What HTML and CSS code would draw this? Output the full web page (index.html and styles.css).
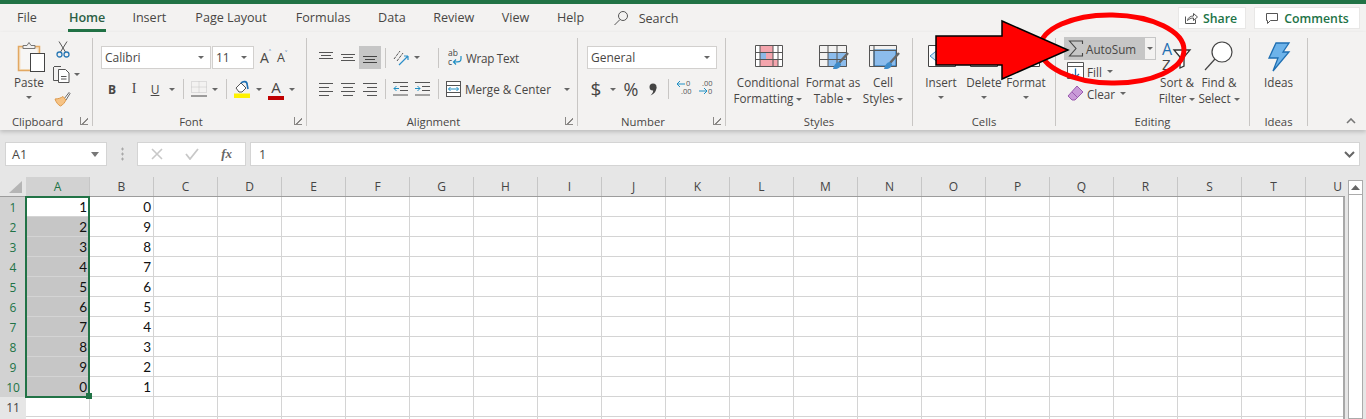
FILE: index.html
```html
<!DOCTYPE html>
<html lang="en">
<head>
<meta charset="utf-8">
<title>Excel AutoSum</title>
<link rel="stylesheet" href="styles.css">
</head>
<body>
<div class="app">
  <div class="titlebar"></div>
  <nav class="tabs">
    <span class="tab tab-file">File</span>
    <span class="tab tab-active">Home</span>
    <span class="tab tab-wide">Insert</span>
    <span class="tab tab-wide">Page Layout</span>
    <span class="tab">Formulas</span>
    <span class="tab">Data</span>
    <span class="tab">Review</span>
    <span class="tab">View</span>
    <span class="tab">Help</span>
    <span class="search">
      <svg width="16" height="16" viewBox="0 0 16 16"><circle cx="10" cy="6" r="4.5" fill="none" stroke="#555"/><path d="M7 9.500 1.500 15" stroke="#555" fill="none"/></svg>
      <span>Search</span>
    </span>
    <div class="share-area">
      <span class="pill pill-share">
        <svg width="14" height="14" viewBox="0 0 14 14"><path d="M1.500 5.500v7h10v-4M3.500 9.500c.5-3 3-4.500 6-4.500V2.500l4 3.500-4 3.500V7c-2.500 0-4.500 1-6 2.500z" fill="none" stroke="#555"/></svg>
        Share
      </span>
      <span class="pill pill-comments">
        <svg width="14" height="13" viewBox="0 0 14 13"><path d="M1.500 1.500h11v7h-7l-3 3v-3h-1z" fill="none" stroke="#555"/></svg>
        Comments
      </span>
    </div>
  </nav>

  <section class="ribbon">
    <div class="group g-clipboard">
      <div class="body clip-body">
        <div class="paste-col">
          <svg width="28" height="32" viewBox="0 0 28 32"><rect x="1.500" y="5.500" width="21" height="24" fill="#f6e3c8" stroke="#e2a862" stroke-width="1.500"/><rect x="3.500" y="8" width="17" height="20" fill="#f7f6f5"/><path d="M6 7.500V4.500h4l2-3 2 3h4v3z" fill="#f3f2f1" stroke="#777"/><rect x="13.500" y="12.500" width="14" height="18" fill="#fff" stroke="#444"/></svg>
          <span class="btn-text paste-text">Paste</span>
          <i class="caret"></i>
        </div>
        <div class="clip-small">
          <svg width="14" height="17" viewBox="0 0 14 17"><path d="M3 .500 9.500 11M11 .500 4.500 11" stroke="#555" fill="none"/><circle cx="3.500" cy="13.500" r="2.500" fill="none" stroke="#2b79b5" stroke-width="1.300"/><circle cx="10.500" cy="13.500" r="2.500" fill="none" stroke="#2b79b5" stroke-width="1.300"/></svg>
          <div class="copy-row">
            <svg width="17" height="17" viewBox="0 0 17 17"><path d="M1 .500h7M.500 1v13.500h5" fill="none" stroke="#555"/><path d="M5.500 3.500h7l3.500 3.500v9.500H5.500z" fill="#fff" stroke="#555"/><path d="M8 10.500h5.500M8 13h5.500" stroke="#555"/></svg>
            <i class="caret"></i>
          </div>
          <svg width="17" height="16" viewBox="0 0 17 16"><path d="M10 8l5-6.500 1 1L12 9z" fill="#fff" stroke="#666"/><path d="M1 8c3 0 6-1 8-2.500L12 9c-1 2-3 5-5.500 6C4 14 2 11 1 8z" fill="#f6c385" stroke="#dd9a4d"/></svg>
        </div>
      </div>
      <div class="label-row"><span class="label">Clipboard</span><i class="launcher"></i></div>
    </div>
    <i class="vsep"></i>

    <div class="group g-font">
      <div class="body tool-body">
        <div class="row1 font-row1">
          <span class="select sel-font">Calibri<i class="caret"></i></span>
          <span class="select sel-size">11<i class="caret"></i></span>
          <span class="grow-a">A<small>˄</small></span>
          <span class="shrink-a">A<small>˅</small></span>
        </div>
        <div class="row2 font-row2">
          <b class="fmt fmt-b">B</b>
          <i class="fmt fmt-i">I</i>
          <u class="fmt">U</u>
          <i class="caret"></i>
          <i class="sep"></i>
          <svg width="16" height="16" viewBox="0 0 16 16"><path d="M.500 .500h15v11H.500zM8 .500v11M.500 6h15" fill="none" stroke="#c4c4c4" stroke-dasharray="1 1"/><path d="M0 15h16" stroke="#444"/></svg>
          <i class="caret"></i>
          <i class="sep"></i>
          <svg width="17" height="18" viewBox="0 0 17 18"><path d="M2 8l5-5 5 5-4 4H5z" fill="#fff" stroke="#555"/><path d="M7 3c2-2 6-2 6 1l1 5" fill="none" stroke="#1f6fb2" stroke-width="1.600"/><rect x="0" y="13.500" width="16" height="4.500" fill="#fff200"/></svg>
          <i class="caret"></i>
          <span class="color-a">A<i></i></span>
          <i class="caret"></i>
        </div>
      </div>
      <div class="label-row"><span class="label">Font</span><i class="launcher"></i></div>
    </div>
    <i class="vsep"></i>

    <div class="group g-align">
      <div class="body tool-body">
        <div class="row1 align-row1">
          <span class="alg"><svg width="14" height="11" viewBox="0 0 14 11"><path d="M0 .500h14M2 3.500h10M0 6.500h14" stroke="#555"/></svg></span>
          <span class="alg"><svg width="14" height="11" viewBox="0 0 14 11"><path d="M0 2.500h14M2 5.500h10M0 8.500h14" stroke="#555"/></svg></span>
          <span class="alg alg-on"><svg width="14" height="11" viewBox="0 0 14 11"><path d="M0 4.500h14M2 7.500h10M0 10.500h14" stroke="#444"/></svg></span>
          <i class="sep"></i>
          <svg width="17" height="16" viewBox="0 0 17 16"><path d="M1 9l6-8M4 11l6-8" stroke="#555" fill="none" stroke-dasharray="3 1"/><path d="M6 15 15 6M15 6h-4M15 6v4" stroke="#2b8fc9" fill="none" stroke-width="1.200"/></svg>
          <i class="caret"></i>
          <span></span>
          <i class="sep"></i>
          <span class="wrap">
            <svg class="wrap-icon" width="15" height="18" viewBox="0 0 15 18"><text x="0" y="7" class="mini-text">ab</text><text x="0" y="16" class="mini-text">c</text><path d="M13 7v3c0 3-2 3-7 3M8 10.500 5.500 13 8 15.500" fill="none" stroke="#1f8fc4" stroke-width="1.200"/></svg>
            <span class="wrap-text">Wrap Text</span>
          </span>
        </div>
        <div class="row2 align-row2">
          <svg width="14" height="14" viewBox="0 0 14 14"><path d="M0 1.500h14M0 5.500h10M0 9.500h14M0 13.500h10" stroke="#555"/></svg>
          <svg width="14" height="14" viewBox="0 0 14 14"><path d="M0 1.500h14M2 5.500h10M0 9.500h14M2 13.500h10" stroke="#555"/></svg>
          <svg width="14" height="14" viewBox="0 0 14 14"><path d="M0 1.500h14M4 5.500h10M0 9.500h14M4 13.500h10" stroke="#555"/></svg>
          <i class="sep"></i>
          <svg width="15" height="14" viewBox="0 0 15 14"><path d="M0 .500h15M7 4.500h8M7 8.500h8M0 13h15" stroke="#555"/><path d="M1 6.500h5M3.500 4 1 6.500 3.500 9" fill="none" stroke="#1f8fc4"/></svg>
          <svg width="15" height="14" viewBox="0 0 15 14"><path d="M0 .500h15M7 4.500h8M7 8.500h8M0 13h15" stroke="#555"/><path d="M0 6.500h5M2.500 4 5 6.500 2.500 9" fill="none" stroke="#1f8fc4"/></svg>
          <span></span>
          <i class="sep"></i>
          <span class="merge">
            <svg width="15" height="16" viewBox="0 0 15 16"><rect x=".5" y=".5" width="14" height="15" fill="#fff" stroke="#555"/><path d="M.5 4.500h14M.5 11.500h14" stroke="#555"/><path d="M2.500 8h10M4.500 6 2.500 8l2 2M10.500 6l2 2-2 2" fill="none" stroke="#1f8fc4"/></svg>
            <span>Merge &amp; Center</span>
            <i class="caret merge-caret"></i>
          </span>
        </div>
      </div>
      <div class="label-row"><span class="label">Alignment</span><i class="launcher"></i></div>
    </div>
    <i class="vsep"></i>

    <div class="group g-number">
      <div class="body tool-body">
        <div class="row1">
          <span class="select sel-number">General<i class="caret"></i></span>
        </div>
        <div class="row2 number-row2">
          <span class="sym sym-dollar">$</span>
          <i class="caret"></i>
          <span class="sym sym-pct">%</span>
          <svg width="8" height="13" viewBox="0 0 8 13"><circle cx="4" cy="4" r="3.500" fill="#444"/><path d="M7.500 4c0 4-2 7-6 8.500 2-2 3-4 2.500-5z" fill="#444"/></svg>
          <i class="sep"></i>
          <span class="dec"><svg width="17" height="16" viewBox="0 0 17 16"><path d="M1 5h8M4 2 1 5l3 3" fill="none" stroke="#1f8fc4"/><text x="10" y="7" class="dec-text">0</text><text x="5" y="15" class="dec-text">.00</text></svg></span>
          <span class="dec"><svg width="17" height="16" viewBox="0 0 17 16"><text x="4" y="7" class="dec-text">.00</text><path d="M1 12h8M6 9l3 3-3 3" fill="none" stroke="#1f8fc4"/><text x="10" y="15" class="dec-text">0</text></svg></span>
        </div>
      </div>
      <div class="label-row"><span class="label">Number</span><i class="launcher"></i></div>
    </div>
    <i class="vsep"></i>

    <div class="group g-styles">
      <div class="body big-body">
        <div class="big big-cond">
          <svg width="29" height="23" viewBox="0 0 29 23" preserveAspectRatio="xMidYMin"><rect x=".5" y=".5" width="27" height="21" fill="#fff"/><rect x="5" y="1" width="13" height="6" fill="#f4a5ad"/><rect x="5" y="8" width="6" height="6" fill="#8db9e6"/><rect x="11" y="8" width="7" height="6" fill="#f4a5ad"/><rect x="5" y="15" width="18" height="6" fill="#f4a5ad"/><path d="M.500 .500h27v21H.500zM5 .500v21M18 .500v21M23 .500v21M.500 7.500h27M.500 14.500h27" fill="none" stroke="#555"/></svg>
          <span class="btn-text">Conditional</span>
          <span class="btn-text">Formatting<i class="caret inline"></i></span>
        </div>
        <div class="big big-table">
          <svg width="30" height="26" viewBox="0 0 30 26" preserveAspectRatio="xMidYMin"><rect x="9" y="8" width="19" height="14" fill="#8cbcec"/><path d="M.500 .500h27v21H.500zM9 .500v21M18 .500v21M.500 7.500h27M.500 14.500h27" fill="none" stroke="#555"/><path d="M29 8 20 18" stroke="#666" stroke-width="2.500"/><path d="M20 17c-3 0-5 3-6 7h2c3 0 6-2 6-5z" fill="#3d8bc9"/></svg>
          <span class="btn-text">Format as</span>
          <span class="btn-text">Table<i class="caret inline"></i></span>
        </div>
        <div class="big big-cell">
          <svg width="31" height="26" viewBox="0 0 31 26" preserveAspectRatio="xMidYMin"><rect x="5" y="5" width="22" height="16" fill="#8cbcec" stroke="#1f6fb2"/><path d="M.500 .500h27v21H.500zM5 .500v21M.500 5.500h27" fill="none" stroke="#555"/><path d="M30 8 21 18" stroke="#666" stroke-width="2.500"/><path d="M21 17c-3 0-5 3-6 7h2c3 0 6-2 6-5z" fill="#3d8bc9"/></svg>
          <span class="btn-text">Cell</span>
          <span class="btn-text">Styles<i class="caret inline"></i></span>
        </div>
      </div>
      <div class="label-row"><span class="label">Styles</span></div>
    </div>
    <i class="vsep"></i>

    <div class="group g-cells">
      <div class="body big-body">
        <div class="big big-ins">
          <svg width="28" height="23" viewBox="0 0 28 23" preserveAspectRatio="xMidYMin"><path d="M.500 .500h27v21H.500z" fill="#fff" stroke="#444"/><path d="M12 3 2 11l10 8v-5h10V8H12z" fill="#cfe3f5" stroke="#3d8bc9"/></svg>
          <span class="btn-text">Insert</span>
          <i class="caret stacked"></i>
        </div>
        <div class="big big-del">
          <svg width="28" height="23" viewBox="0 0 28 23" preserveAspectRatio="xMidYMin"><path d="M.500 .500h27v21H.500z" fill="#fff" stroke="#444"/></svg>
          <span class="btn-text">Delete</span>
          <i class="caret stacked"></i>
        </div>
        <div class="big big-fmt">
          <svg width="28" height="23" viewBox="0 0 28 23" preserveAspectRatio="xMidYMin"><path d="M.500 .500h27v21H.500z" fill="#fff" stroke="#444"/></svg>
          <span class="btn-text">Format</span>
          <i class="caret stacked"></i>
        </div>
      </div>
      <div class="label-row"><span class="label">Cells</span></div>
    </div>
    <i class="vsep"></i>

    <div class="group g-edit">
      <div class="body edit-body">
        <div class="edit-list">
          <div class="autosum">
            <span class="autosum-main">
              <svg width="16" height="17" viewBox="0 0 16 17"><path d="M14.500 4V1H1.500L8 8.500 1.500 16h13v-3" fill="none" stroke="#444" stroke-width="1.100"/></svg>
              <span>AutoSum</span>
            </span>
            <span class="autosum-drop"><i class="caret"></i></span>
          </div>
          <div class="edit-line">
            <svg width="17" height="19" viewBox="0 0 17 19"><path d="M.500 .500h16v16H.500z" fill="#fff" stroke="#555"/><path d="M.500 4.500h16" stroke="#555"/><path d="M8.500 6.500v9M5 12l3.500 3.500L12 12" fill="none" stroke="#1f6fb2" stroke-width="1.300"/></svg>
            <span>Fill</span><i class="caret"></i>
          </div>
          <div class="edit-line edit-line-clear">
            <svg width="17" height="17" viewBox="0 0 17 17"><path d="M10 1l6 6-8 8H5L1 11z" fill="#c99ad8" stroke="#9a5bb0"/><path d="M5 7l5 5" stroke="#9a5bb0"/></svg>
            <span>Clear</span><i class="caret"></i>
          </div>
        </div>
        <div class="big big-sort">
          <svg class="tall-icon" width="32" height="30" viewBox="0 0 32 30"><text x="1" y="14" class="sort-a">A</text><text x="1" y="29" class="sort-z">Z</text><path d="M13 9h16l-6 7v9l-4 2V16z" fill="#fff" stroke="#333" stroke-width="1.300"/></svg>
          <span class="btn-text">Sort &amp;</span>
          <span class="btn-text">Filter<i class="caret inline"></i></span>
        </div>
        <div class="big big-find">
          <svg class="tall-icon" width="30" height="30" viewBox="0 0 30 30"><circle cx="18" cy="11" r="10" fill="#fff" stroke="#444" stroke-width="1.200"/><path d="M11 18 1 29" stroke="#444" stroke-width="1.200"/></svg>
          <span class="btn-text">Find &amp;</span>
          <span class="btn-text">Select<i class="caret inline"></i></span>
        </div>
      </div>
      <div class="label-row"><span class="label">Editing</span></div>
    </div>
    <i class="vsep"></i>

    <div class="group g-ideas">
      <div class="body big-body">
        <div class="big big-ideas">
          <svg class="tall-icon" width="22" height="30" viewBox="0 0 22 30"><path d="M8 1h13l-6 9h6L5 29l5-13H1z" fill="#6db3ea" stroke="#1f6fb2" stroke-width="1.300"/></svg>
          <span class="btn-text">Ideas</span>
        </div>
      </div>
      <div class="label-row"><span class="label">Ideas</span></div>
    </div>
    <i class="vsep"></i>
    <div class="collapse">
      <svg width="10" height="6" viewBox="0 0 10 6"><path d="M1 5l4-4 4 4" fill="none" stroke="#777" stroke-width="1.600"/></svg>
    </div>
  </section>

  <section class="formula-bar">
    <div class="namebox"><span>A1</span><i class="caret caret-big"></i></div>
    <div class="fb-dots"></div>
    <div class="fb-buttons">
      <svg width="12" height="12" viewBox="0 0 12 12"><path d="M1 1l10 10M11 1 1 11" stroke="#c8c8c8" stroke-width="1.600"/></svg>
      <svg width="14" height="12" viewBox="0 0 14 12"><path d="M1 6l4 5 8-10" fill="none" stroke="#c8c8c8" stroke-width="1.800"/></svg>
      <span class="fx">fx</span>
    </div>
    <div class="fb-input"><span>1</span><svg width="11" height="7" viewBox="0 0 11 7"><path d="M1 1l4.500 4.500L10 1" fill="none" stroke="#666" stroke-width="2"/></svg></div>
  </section>

  <section class="sheet">
    <div class="grid-wrap">
      <div class="head-row">
        <span class="corner"><svg width="13" height="12" viewBox="0 0 13 12"><path d="M13 0v12H0z" fill="#b5b5b5"/></svg></span>
        <span class="ch ch-on">A</span><span class="ch">B</span><span class="ch">C</span><span class="ch">D</span><span class="ch">E</span><span class="ch">F</span><span class="ch">G</span><span class="ch">H</span><span class="ch">I</span><span class="ch">J</span><span class="ch">K</span><span class="ch">L</span><span class="ch">M</span><span class="ch">N</span><span class="ch">O</span><span class="ch">P</span><span class="ch">Q</span><span class="ch">R</span><span class="ch">S</span><span class="ch">T</span><span class="ch">U</span>
      </div>
      <div class="cells">
        <div class="row"><span class="rh rh-on">1</span><span class="c">1</span><span class="c">0</span></div>
        <div class="row"><span class="rh rh-on">2</span><span class="c c-sel">2</span><span class="c">9</span></div>
        <div class="row"><span class="rh rh-on">3</span><span class="c c-sel">3</span><span class="c">8</span></div>
        <div class="row"><span class="rh rh-on">4</span><span class="c c-sel">4</span><span class="c">7</span></div>
        <div class="row"><span class="rh rh-on">5</span><span class="c c-sel">5</span><span class="c">6</span></div>
        <div class="row"><span class="rh rh-on">6</span><span class="c c-sel">6</span><span class="c">5</span></div>
        <div class="row"><span class="rh rh-on">7</span><span class="c c-sel">7</span><span class="c">4</span></div>
        <div class="row"><span class="rh rh-on">8</span><span class="c c-sel">8</span><span class="c">3</span></div>
        <div class="row"><span class="rh rh-on">9</span><span class="c c-sel">9</span><span class="c">2</span></div>
        <div class="row"><span class="rh rh-on">10</span><span class="c c-sel">0</span><span class="c">1</span></div>
        <div class="row"><span class="rh">11</span></div>
        <div class="row"><span class="rh"></span></div>
        <div class="selection"><i class="handle"></i></div>
      </div>
    </div>
    <div class="vscroll">
      <span class="vscroll-up"><svg width="9" height="5" viewBox="0 0 9 5"><path d="M4.500 0 9 5H0z" fill="#666"/></svg></span>
      <span class="vscroll-track"></span>
    </div>
  </section>

  <svg class="annotation" width="1366" height="419" viewBox="0 0 1366 419">
    <ellipse cx="1112" cy="49" rx="72" ry="34" fill="none" stroke="#f00" stroke-width="5" transform="rotate(1 1112 49)"/>
    <path d="M936 36H1002V21L1068 50 1002 79V65H936z" fill="#f00" stroke="#000" stroke-width="1.500"/>
  </svg>
</div>
</body>
</html>
```

FILE: styles.css
```css
* { box-sizing: border-box; }
html, body { margin: 0; padding: 0; }
body { width: 1366px; height: 419px; overflow: hidden; background: #e6e6e6; }
.app { position: relative; width: 1366px; height: 419px; overflow: hidden; font-family: "Open Sans", "Noto Sans", sans-serif; font-size: 12px; color: #484644; }
i { font-style: normal; }

.titlebar { height: 4px; background: #217346; }

.tabs { display: flex; align-items: center; height: 28px; background: #f3f2f1; padding-left: 17px; font-size: 12.6px; color: #484644; }
.tab { position: relative; margin-right: 27.500px; line-height: 28px; height: 28px; white-space: nowrap; }
.tab-file { margin-right: 32px; }
.tab-active { margin-right: 27px; color: #2b5f45; font-weight: 600; }
.tab-wide { margin-right: 29px; }
.tab-active::after { content: ""; position: absolute; left: -1px; right: -1px; bottom: 0; height: 3px; background: #217346; }
.search { display: flex; align-items: center; gap: 10px; margin-left: 1px; }
.share-area { display: flex; gap: 8px; margin-left: auto; margin-right: 6px; }
.pill { display: flex; align-items: center; justify-content: center; gap: 5px; height: 22px; background: #fff; border: 1px solid #e8e7e6; color: #217346; font-size: 12.3px; font-weight: 600; }
.pill-share { width: 68px; padding-right: 3px; }
.pill-comments { width: 106px; }

.ribbon { position: relative; z-index: 1; display: flex; height: 98px; background: #f3f2f1; box-shadow: 0 2px 4px rgba(0,0,0,.18); }
.group { display: flex; flex-direction: column; height: 92px; margin-top: 6px; }
.body { flex: 1; display: flex; min-height: 0; }
.vsep { width: 1px; height: 88px; margin-top: 6px; background: #c8c6c4; flex: none; }
.label-row { display: flex; align-items: center; height: 14px; margin-bottom: 2px; font-size: 11.3px; }
.label { flex: 1; text-align: center; }
.launcher { width: 8px; height: 8px; margin: 0 4px 0 5px; border-left: 1px solid #8a8886; border-bottom: 1px solid #8a8886; background: linear-gradient(135deg, transparent 55%, #8a8886 55%, #8a8886 70%, transparent 70%); }

.g-clipboard { width: 92px; }
.g-font { width: 213px; }
.g-align { width: 270px; }
.g-number { width: 147px; }
.g-styles { width: 186px; }
.g-cells { width: 142px; }
.g-edit { width: 193px; }
.g-ideas { width: 57px; }
.collapse { flex: 1; display: flex; justify-content: flex-end; align-items: flex-end; padding: 0 10px 6px 0; }

.caret { display: block; width: 0; height: 0; border: 3px solid transparent; border-top: 3px solid #666; border-bottom-width: 0; justify-self: center; flex: none; }
.caret.inline { display: inline-block; margin-left: 3px; vertical-align: middle; }
.caret-big { border-width: 4px; border-top: 5px solid #777; border-bottom-width: 0; }
.btn-text { display: block; height: 16px; line-height: 16px; font-size: 11.7px; white-space: nowrap; text-align: center; }
.sep { display: block; width: 1px; height: 20px; background: #c8c6c4; justify-self: center; }

.clip-body { padding: 3px 0 0 12px; }
.paste-col { width: 34px; display: flex; flex-direction: column; align-items: center; }
.paste-col svg { margin-left: 4px; }
.paste-text { margin-top: 1px; }
.paste-col .caret { margin-top: 6px; }
.clip-small { margin-left: 7px; display: flex; flex-direction: column; gap: 8px; }
.clip-small > svg:first-child { margin-left: 3px; }
.copy-row { display: flex; align-items: center; gap: 4px; }
.clip-small > svg:last-child { margin-left: 1px; }

.tool-body { flex-direction: column; padding-top: 8px; }
.row1 { height: 23px; }
.row2 { height: 22px; margin-top: 9px; }
.row1, .row2 { display: grid; align-items: center; justify-items: center; }
.g-font .tool-body { padding-left: 8px; }
.font-row1 { grid-template-columns: 110px 43px 1px 22px 20px; column-gap: 0; justify-items: start; }
.font-row1 .shrink-a { grid-column: 5; }
.font-row1 .grow-a { grid-column: 4; margin-left: 5px; }
.sel-size { grid-column: 2; margin-left: 1px; width: 42px; }
.select { display: flex; align-items: center; justify-content: space-between; height: 23px; background: #fff; border: 1px solid #d2d0ce; padding: 0 6px 0 3px; font-size: 12px; color: #484644; }
.sel-font { width: 110px; }
.sel-number { width: 130px; justify-self: start; }
.grow-a { font-size: 14px; display: flex; }
.shrink-a { font-size: 12.5px; display: flex; }
.grow-a small, .shrink-a small { font-size: 8px; line-height: 10px; color: #1f6fb2; }
.font-row2 { grid-template-columns: 22px 22px 20px 14px 8px 24px 8px 14px 18px 15px 20px 12px; }
.fmt { font-family: "Liberation Serif", serif; font-size: 14px; }
.fmt-b { font-family: "Open Sans", sans-serif; font-weight: 700; font-size: 12px; }
.font-row2 u { font-family: "Open Sans", sans-serif; font-size: 12px; }
.color-a { display: flex; flex-direction: column; align-items: center; font-size: 15px; line-height: 17px; width: 16px; }
.color-a i { display: block; width: 16px; height: 4px; background: #c00000; }

.g-align .tool-body { padding-left: 8px; }
.align-row1 { grid-template-columns: 22px 22px 22px 8px 24px 8px 13px 8px auto; }
.align-row2 { grid-template-columns: 22px 22px 22px 8px 22px 22px 1px 8px auto; }
.alg { display: flex; align-items: center; justify-content: center; width: 22px; height: 23px; }
.alg-on { background: #c6c6c6; }
.wrap { justify-self: start; display: flex; align-items: center; gap: 3px; margin-left: 6px; font-size: 11.7px; }
.wrap-text { letter-spacing: -.3px; }
.wrap-icon { overflow: visible; }
.merge { justify-self: start; display: flex; align-items: center; gap: 4px; margin-left: 4px; font-size: 11.7px; }
.merge-caret { margin-left: 9px; }
.mini-text { font-size: 8.500px; fill: #444; font-family: "Open Sans", sans-serif; }

.g-number .tool-body { padding-left: 9px; }
.number-row2 { grid-template-columns: 18px 16px 20px 23px 8px 24px 20px; }
.sym { font-size: 19px; line-height: 22px; }
.sym-pct { font-size: 18px; }
.dec-text { font-size: 7.500px; fill: #555; font-family: "Open Sans", sans-serif; }

.big-body { padding-top: 7px; }
.big { display: flex; flex-direction: column; align-items: center; flex: none; }
.big svg { height: 29px; flex: none; }
.big .caret.stacked { margin-top: 6px; }
.g-styles .big-body { padding-left: 7px; }
.big-cond { width: 70px; }
.big-cond svg { margin-left: 3px; }
.big-table { width: 60px; }
.big-cell { width: 40px; }
.big-table svg, .big-cell svg { margin-left: 2px; }
.g-cells .big-body { padding-left: 6px; }
.big-ins { width: 44px; }
.big-ins svg { margin-left: 1px; }
.big-del, .big-fmt { width: 42px; }

.edit-body { padding-left: 8px; }
.edit-list { width: 92px; margin-top: -1px; font-size: 11.7px; }
.autosum { display: flex; height: 23px; }
.autosum-main { display: flex; align-items: center; width: 80px; background: #c6c6c6; padding-left: 4px; gap: 2px; }
.autosum-drop { display: flex; align-items: center; justify-content: center; width: 12px; border: 1px solid #c6c6c6; }
.edit-line { display: flex; align-items: center; height: 23px; padding-left: 3px; gap: 3px; }
.edit-line-clear { height: 21px; }
.edit-line .caret { margin-left: 2px; }
.big-sort, .big-find { width: 42px; }
.edit-body .big { padding-top: 3px; }
.big svg.tall-icon { height: 30px; margin-bottom: 3px; overflow: visible; }
.sort-a { font-size: 16px; fill: #1f6fb2; font-family: "Open Sans", sans-serif; }
.sort-z { font-size: 15px; fill: #444; font-family: "Open Sans", sans-serif; }
.big-ideas { width: 57px; }
.big-ideas svg.tall-icon { margin-top: -3px; margin-bottom: 2px; }

.formula-bar { display: flex; height: 47px; padding-top: 12px; background: #e6e6e6; }
.namebox { display: flex; align-items: center; justify-content: space-between; width: 102px; height: 24px; margin-left: 5px; padding: 0 7px 0 6px; background: #fff; border: 1px solid #d4d4d4; font-size: 12.5px; }
.fb-dots { width: 30px; height: 24px; background: radial-gradient(circle, #a8a8a8 1px, transparent 1.300px) center / 3px 5px repeat-y; background-clip: content-box; padding: 4px 0; }
.fb-buttons { display: flex; align-items: center; justify-content: space-between; width: 109px; height: 24px; padding: 0 13px; background: #fff; border: 1px solid #d4d4d4; }
.fx { font-family: "Liberation Serif", serif; font-style: italic; font-weight: 700; font-size: 13px; color: #666; }
.fb-input { display: flex; align-items: center; justify-content: space-between; width: 1110px; height: 24px; margin-left: 4px; padding: 0 4px 0 8px; background: #fff; border: 1px solid #d4d4d4; font-size: 12.5px; }

.sheet { display: flex; height: 242px; background: #e6e6e6; }
.grid-wrap { width: 1345px; overflow: hidden; flex: none; }
.head-row { display: flex; height: 20px; width: 1370px; border-bottom: 1px solid #9c9c9c; background: #e6e6e6; }
.corner { display: flex; align-items: flex-end; justify-content: flex-end; width: 26px; flex: none; padding: 0 4px 3px 0; }
.ch { width: 64px; flex: none; text-align: center; line-height: 19px; font-size: 12px; color: #444; border-right: 1px solid #c6c6c6; }
.ch-on { background: #d2d2d2; color: #217346; }
.cells { position: relative; height: 222px; background-color: #fff;
  background-image: linear-gradient(to right, transparent 63px, #d4d4d4 63px), linear-gradient(to bottom, transparent 19px, #d4d4d4 19px);
  background-size: 64px 100%, 100% 20px; background-position: 26px 0, 0 0; border-right: 2px solid #a8a8a8; }
.row { display: grid; grid-template-columns: 26px 64px 64px; height: 20px; }
.rh { background: #e6e6e6; border-bottom: 1px solid #c6c6c6; text-align: center; font-size: 12px; line-height: 21px; color: #444; }
.rh-on { background: #d2d2d2; color: #217346; border-bottom-color: #e2e2e2; }
.c { height: 19px; padding-right: 3px; text-align: right; font-family: Lato, "Liberation Sans", sans-serif; font-size: 13.500px; line-height: 21px; color: #111; }
.c-sel { background: #c6c6c6; width: 63px; padding-right: 2px; }
.selection { position: absolute; left: 25px; top: -1px; width: 65px; height: 202px; border: 2px solid #217346; }
.handle { position: absolute; right: -4px; bottom: -3px; width: 6px; height: 6px; background: #217346; }

.vscroll { display: flex; flex-direction: column; width: 15px; margin-left: 3px; padding-top: 3px; }
.vscroll-up { display: flex; align-items: center; justify-content: center; height: 15px; background: #fff; border: 1px solid #ababab; }
.vscroll-track { flex: 1; background: #fff; border: 1px solid #ababab; border-top: 0; }

.annotation { position: absolute; left: 0; top: 0; z-index: 5; pointer-events: none; }
```
